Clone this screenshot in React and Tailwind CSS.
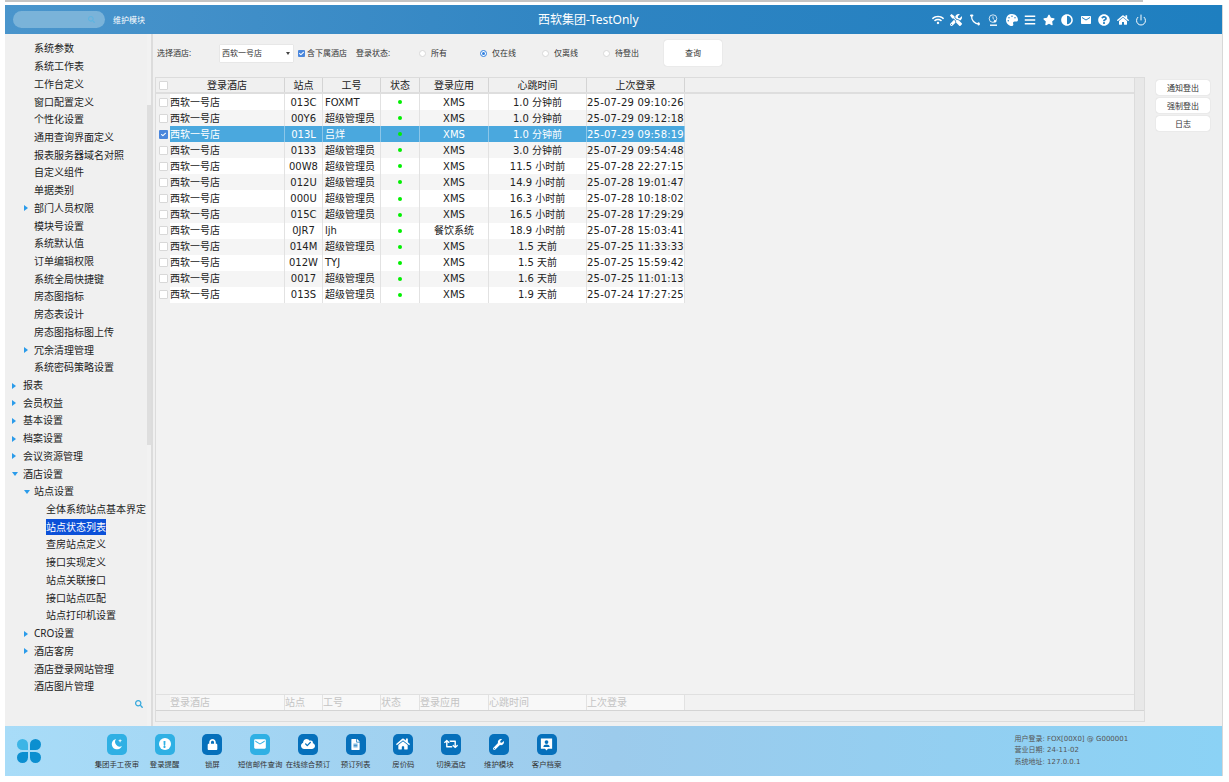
import {
  FaAdjust, FaBars, FaCheck, FaCloud, FaExclamation, FaHome, FaLock, FaMoon, FaPalette,
  FaQuestionCircle, FaSearch, FaStar, FaTools, FaWifi, FaWrench, FaRetweet, FaFileAlt,
} from 'react-icons/fa'
import { FiPower } from 'react-icons/fi'
import { MdEmail } from 'react-icons/md'

const font = { fontFamily: '"Noto Sans", "Noto Sans CJK SC", sans-serif' }
const dataFont = { fontFamily: '"DejaVu Sans", "Noto Sans CJK SC", sans-serif' }

const tree = [
  { label: '系统参数', level: 1 },
  { label: '系统工作表', level: 1 },
  { label: '工作台定义', level: 1 },
  { label: '窗口配置定义', level: 1 },
  { label: '个性化设置', level: 1 },
  { label: '通用查询界面定义', level: 1 },
  { label: '报表服务器域名对照', level: 1 },
  { label: '自定义组件', level: 1 },
  { label: '单据类别', level: 1 },
  { label: '部门人员权限', level: 1, arrow: 'right' },
  { label: '模块号设置', level: 1 },
  { label: '系统默认值', level: 1 },
  { label: '订单编辑权限', level: 1 },
  { label: '系统全局快捷键', level: 1 },
  { label: '房态图指标', level: 1 },
  { label: '房态表设计', level: 1 },
  { label: '房态图指标图上传', level: 1 },
  { label: '冗余清理管理', level: 1, arrow: 'right' },
  { label: '系统密码策略设置', level: 1 },
  { label: '报表', level: 0, arrow: 'right' },
  { label: '会员权益', level: 0, arrow: 'right' },
  { label: '基本设置', level: 0, arrow: 'right' },
  { label: '档案设置', level: 0, arrow: 'right' },
  { label: '会议资源管理', level: 0, arrow: 'right' },
  { label: '酒店设置', level: 0, arrow: 'down' },
  { label: '站点设置', level: 1, arrow: 'down' },
  { label: '全体系统站点基本界定', level: 2 },
  { label: '站点状态列表', level: 2, active: true },
  { label: '查房站点定义', level: 2 },
  { label: '接口实现定义', level: 2 },
  { label: '站点关联接口', level: 2 },
  { label: '接口站点匹配', level: 2 },
  { label: '站点打印机设置', level: 2 },
  { label: 'CRO设置', level: 1, arrow: 'right' },
  { label: '酒店客房', level: 1, arrow: 'right' },
  { label: '酒店登录网站管理', level: 1 },
  { label: '酒店图片管理', level: 1 },
]

const rows = [
  ['013C', 'FOXMT', 'XMS', '1.0 分钟前', '25-07-29 09:10:26'],
  ['00Y6', '超级管理员', 'XMS', '1.0 分钟前', '25-07-29 09:12:18'],
  ['013L', '吕烊', 'XMS', '1.0 分钟前', '25-07-29 09:58:19', true],
  ['0133', '超级管理员', 'XMS', '3.0 分钟前', '25-07-29 09:54:48'],
  ['00W8', '超级管理员', 'XMS', '11.5 小时前', '25-07-28 22:27:15'],
  ['012U', '超级管理员', 'XMS', '14.9 小时前', '25-07-28 19:01:47'],
  ['000U', '超级管理员', 'XMS', '16.3 小时前', '25-07-28 10:18:02'],
  ['015C', '超级管理员', 'XMS', '16.5 小时前', '25-07-28 17:29:29'],
  ['0JR7', 'ljh', '餐饮系统', '18.9 小时前', '25-07-28 15:03:41'],
  ['014M', '超级管理员', 'XMS', '1.5 天前', '25-07-25 11:33:33'],
  ['012W', 'TYJ', 'XMS', '1.5 天前', '25-07-25 15:59:42'],
  ['0017', '超级管理员', 'XMS', '1.6 天前', '25-07-25 11:01:13'],
  ['013S', '超级管理员', 'XMS', '1.9 天前', '25-07-24 17:27:25'],
]

function CloudCheck() {
  return (
    <span className="relative flex items-center justify-center text-[14px]">
      <FaCloud />
      <FaCheck className="absolute text-[6px] text-[#0670bb]" />
    </span>
  )
}

function Portrait() {
  return (
    <svg viewBox="0 0 16 16" className="h-[15px] w-[15px]">
      <path d="M2 1.5h12v11H9.6L8 14.5l-1.6-2H2z" fill="#fff" />
      <circle cx="8" cy="5.4" r="2" fill="#0670bb" />
      <path d="M4.6 10.6c.3-1.8 1.6-2.5 3.4-2.5s3.1.7 3.4 2.5z" fill="#0670bb" />
    </svg>
  )
}

function MoonStar() {
  return (
    <svg viewBox="0 0 16 16" className="h-[14px] w-[14px]" fill="#fff">
      <path d="M7 2.2a6 6 0 1 0 6.6 8.2A5.4 5.4 0 0 1 7 2.2z" />
      <path d="M11.5 2l.6 1.7 1.7.6-1.7.6-.6 1.7-.6-1.7-1.7-.6 1.7-.6z" />
    </svg>
  )
}

// thin handset in the top bar
function Handset() {
  return (
    <svg viewBox="0 0 12 12" className="h-[12px] w-[12px]" fill="none" stroke="#fff" strokeLinecap="round">
      <path d="M2.6 1.6C2.2 6 5.5 10 10.2 10" strokeWidth="1.3" />
      <path d="M2 1.5h1.4M9.6 9.2v1.4" strokeWidth="2" />
    </svg>
  )
}

function ClockUser() {
  return (
    <svg viewBox="0 0 12 12" className="h-[12px] w-[12px]" fill="none" stroke="#fff">
      <circle cx="6" cy="4.6" r="3.8" strokeWidth="0.8" />
      <path d="M6 2.4v2.2l1.2.8" strokeWidth="0.8" />
      <circle cx="8" cy="7.2" r="1.2" fill="#fff" stroke="none" />
      <path d="M3 11.2h7" strokeWidth="1.4" />
    </svg>
  )
}

const dock = [
  { label: '集团手工夜审', Icon: MoonStar, light: true },
  { label: '登录提醒', Icon: FaExclamation, light: true, round: true },
  { label: '锁屏', Icon: FaLock },
  { label: '短信邮件查询', Icon: MdEmail, light: true, big: true },
  { label: '在线综合预订', Icon: CloudCheck },
  { label: '预订列表', Icon: FaFileAlt },
  { label: '房价码', Icon: FaHome, big: true },
  { label: '切换酒店', Icon: FaRetweet, big: true },
  { label: '维护模块', Icon: FaWrench },
  { label: '客户档案', Icon: Portrait },
]

const topIcons = [FaWifi, FaTools, Handset, ClockUser, FaPalette, FaBars, FaStar, FaAdjust, MdEmail, FaQuestionCircle, FaHome, FiPower]

function Arrow({ dir }) {
  if (dir === 'down') {
    return <span className="h-0 w-0 border-x-[3px] border-t-[4px] border-x-transparent border-t-[#2a9bea]" />
  }
  return <span className="h-0 w-0 border-y-[3px] border-l-[4px] border-y-transparent border-l-[#2a9bea]" />
}

function TreeItem({ item }) {
  const pad = item.level === 0 ? 'pl-[7px]' : item.level === 1 ? 'pl-[19px]' : 'pl-[41px]'
  const arrowWidth = item.level === 0 ? 'w-[11px]' : 'w-[10px]'
  return (
    <div className={`flex h-[17.72px] items-center text-[10px] text-[#222] ${pad}`}>
      {item.level < 2 && (
        <span className={`flex shrink-0 items-center ${arrowWidth}`}>{item.arrow && <Arrow dir={item.arrow} />}</span>
      )}
      <span className={item.active ? 'bg-[#0b50d8] leading-[16px] text-white' : ''}>{item.label}</span>
    </div>
  )
}

function Sidebar() {
  return (
    <aside className="flex w-[142px] shrink-0 flex-col">
      <div className="flex-1 pt-[6px]">
        {tree.map((item) => (
          <TreeItem key={item.label} item={item} />
        ))}
      </div>
      <div className="flex h-[26px] justify-end pr-[4px]">
        <FaSearch className="text-[8px] text-[#35a8dc]" />
      </div>
    </aside>
  )
}

function Scrollbar() {
  return (
    <div className="flex w-[6px] shrink-0 flex-col border-r-2 border-[#dcdcdc] bg-[#f2f2f2] pt-[71px]">
      <div className="h-[340px] bg-[#dedede]" />
    </div>
  )
}

function Radio({ label, checked, className }) {
  return (
    <label className={`flex items-center gap-[5px] ${className}`}>
      <span className={`flex h-[7px] w-[7px] items-center justify-center rounded-full border ${checked ? 'border-[#2f7fe0] bg-white' : 'border-[#d8d8d8] bg-white'}`}>
        {checked && <span className="h-[3px] w-[3px] rounded-full bg-[#2f7fe0]" />}
      </span>
      {label}
    </label>
  )
}

function Toolbar() {
  return (
    <div className="flex h-[43px] items-center pb-[5px] pl-[4px] text-[8px] text-[#333]">
      <span className="w-[63px]">选择酒店:</span>
      <div className="flex h-[17px] w-[73px] items-center justify-between bg-white pl-[2px] pr-[3px] shadow-[0_0_1px_#bbb]">
        西软一号店
        <span className="h-0 w-0 border-x-[2.5px] border-t-[3px] border-x-transparent border-t-[#444]" />
      </div>
      <span className="ml-[5px] flex h-[7px] w-[7px] items-center justify-center rounded-[1px] bg-[#4a86dc]">
        <FaCheck className="text-[5px] text-white" />
      </span>
      <span className="ml-[2px] w-[49px]">含下属酒店</span>
      <span className="w-[63px]">登录状态:</span>
      <Radio label="所有" className="w-[61px]" />
      <Radio label="仅在线" checked className="w-[62px]" />
      <Radio label="仅离线" className="w-[61px]" />
      <Radio label="待登出" className="w-[61px]" />
      <button className="h-[26px] w-[58px] rounded-[3px] bg-white text-[8px] text-[#333] shadow-[0_0_1px_#bbb]">查询</button>
    </div>
  )
}

function CheckCell({ checked }) {
  return (
    <div className="flex w-[14px] shrink-0 items-center justify-center">
      <span className={`flex h-[9px] w-[9px] items-center justify-center rounded-[1px] ${checked ? 'bg-[#4a86dc]' : 'border border-[#d8d8d8] bg-white'}`}>
        {checked && <FaCheck className="text-[5px] text-white" />}
      </span>
    </div>
  )
}

function Table() {
  const cell = 'flex h-full shrink-0 items-center border-r'
  return (
    <div className="flex min-w-0 flex-1 flex-col border border-[#dcdcdc] bg-[#f2f2f2]">
      <div className="flex min-h-0 flex-1">
        <div className="flex min-w-0 flex-1 flex-col">
          <div className="flex h-[16px] shrink-0 items-center border-b-2 border-[#dedede] bg-[#f0f0f0] text-[10px] text-[#222]">
            <CheckCell />
            <div className={`${cell} w-[115px] justify-center border-[#d4d4d4]`}>登录酒店</div>
            <div className={`${cell} w-[38px] justify-center border-[#d4d4d4]`}>站点</div>
            <div className={`${cell} w-[58px] justify-center border-[#d4d4d4]`}>工号</div>
            <div className={`${cell} w-[39px] justify-center border-[#d4d4d4]`}>状态</div>
            <div className={`${cell} w-[69px] justify-center border-[#d4d4d4]`}>登录应用</div>
            <div className={`${cell} w-[98px] justify-center border-[#d4d4d4]`}>心跳时间</div>
            <div className={`${cell} w-[98px] justify-center border-[#d4d4d4]`}>上次登录</div>
          </div>
          {rows.map((r, i) => {
            const selected = r[5]
            const line = selected ? 'border-[#8cc6e8]' : 'border-[#e2e2e2]'
            const bg = selected ? 'bg-[#4aa8de] text-white' : i % 2 ? 'bg-[#f5f5f5] text-[#222]' : 'bg-white text-[#222]'
            return (
              <div key={r[0]} className="flex h-[16.08px] shrink-0 items-center text-[10px]" style={dataFont}>
                <div className="flex h-full w-[14px] shrink-0 bg-[#f2f2f2]">
                  <CheckCell checked={selected} />
                </div>
                <div className={`flex h-full items-center ${bg}`}>
                  <div className={`${cell} w-[115px] ${line}`}>西软一号店</div>
                  <div className={`${cell} w-[38px] justify-center ${line}`}>{r[0]}</div>
                  <div className={`${cell} w-[58px] pl-[2px] ${line}`}>{r[1]}</div>
                  <div className={`${cell} w-[39px] justify-center ${line}`}>
                    <span className="h-[4px] w-[4px] rounded-full bg-[#00f000]" />
                  </div>
                  <div className={`${cell} w-[69px] justify-center ${line}`}>{r[2]}</div>
                  <div className={`${cell} w-[98px] justify-center ${line}`}>{r[3]}</div>
                  <div className={`${cell} w-[98px] justify-center tracking-[0.2px] ${line}`}>{r[4]}</div>
                </div>
              </div>
            )
          })}
          <div className="flex-1" />
          <div className="flex h-[16px] shrink-0 items-center border-t border-[#e0e0e0] text-[10px] text-[#c4c4c4]">
            <div className="w-[14px] shrink-0" />
            <div className="flex h-full bg-[#f8f8f8]">
              <div className="w-[115px] border-r border-[#e2e2e2]">登录酒店</div>
              <div className="w-[38px] border-r border-[#e2e2e2]">站点</div>
              <div className="w-[58px] border-r border-[#e2e2e2]">工号</div>
              <div className="w-[39px] border-r border-[#e2e2e2]">状态</div>
              <div className="w-[69px] border-r border-[#e2e2e2]">登录应用</div>
              <div className="w-[98px] border-r border-[#e2e2e2]">心跳时间</div>
              <div className="w-[98px] border-r border-[#e2e2e2]">上次登录</div>
            </div>
          </div>
        </div>
        <div className="w-[10px] shrink-0 border-l border-[#dcdcdc] bg-[#e8e8e8]" />
      </div>
      <div className="h-[11px] shrink-0 border-t border-[#d4d4d4] bg-[#efefef]" />
    </div>
  )
}

function SideButton({ children }) {
  return (
    <button className="flex h-[15px] w-[54px] items-center justify-center rounded-[3px] bg-white text-[8px] text-[#333] shadow-[0_0_1px_#bbb]">
      {children}
    </button>
  )
}

function Main() {
  return (
    <main className="flex min-w-0 flex-1 flex-col">
      <Toolbar />
      <div className="flex min-h-0 flex-1 pb-[4px] pl-[2px]">
        <Table />
        <div className="flex w-[77px] shrink-0 flex-col gap-[3px] pl-[11px] pt-[3px]">
          <SideButton>通知登出</SideButton>
          <SideButton>强制登出</SideButton>
          <SideButton>日志</SideButton>
        </div>
      </div>
    </main>
  )
}

function Header() {
  return (
    <header className="relative flex h-[29px] shrink-0 items-center bg-gradient-to-r from-[#4a95cc] via-[#2e84c2] to-[#1e7fc0] text-white">
      <div className="ml-[8px] flex h-[17px] w-[92px] items-center justify-end rounded-full bg-[#7ab3d9] pr-[10px]">
        <FaSearch className="text-[7px] text-[#5fb4e0]" />
      </div>
      <span className="ml-[8px] text-[8px]">维护模块</span>
      <div className="absolute left-[533px] text-[12px]">西软集团-TestOnly</div>
      <div className="absolute right-[75px] flex items-center gap-[6.5px] text-[12px]">
        {topIcons.map((Icon, i) => (
          <Icon key={i} />
        ))}
      </div>
    </header>
  )
}

function Clover() {
  return (
    <div className="grid w-fit grid-cols-[11px_11px] gap-[2px]">
      <span className="h-[11px] w-[11px] rounded-full rounded-br-none bg-[#3db5e6]" />
      <span className="h-[11px] w-[11px] rounded-full rounded-bl-none bg-[#0c8fd0]" />
      <span className="h-[11px] w-[11px] rounded-full rounded-tr-none bg-[#0c8fd0]" />
      <span className="h-[11px] w-[11px] rounded-full rounded-tl-none bg-[#0c8fd0]" />
    </div>
  )
}

function Dock() {
  return (
    <footer className="flex h-[50px] shrink-0 items-center bg-gradient-to-r from-[#a8dcf8] via-[#9ccbec] to-[#8bd2f5]">
      <div className="ml-[12px] w-[76px] shrink-0">
        <Clover />
      </div>
      <div className="flex">
        {dock.map(({ label, Icon, light, round, big }) => (
          <div key={label} className="flex w-[47.75px] flex-col items-center gap-[4px]">
            <div className={`flex h-[21px] w-[20px] items-center justify-center rounded-[5px] text-white ${big ? 'text-[14px]' : 'text-[11px]'} ${light ? 'bg-[#2fb0e4]' : 'bg-[#0670bb]'}`}>
              {round ? (
                <span className="flex h-[12px] w-[12px] items-center justify-center rounded-full bg-white">
                  <Icon className="text-[7px] text-[#2fb0e4]" />
                </span>
              ) : (
                <Icon />
              )}
            </div>
            <span className="whitespace-nowrap text-[7.4px] leading-[10px] text-[#333]">{label}</span>
          </div>
        ))}
      </div>
      <div className="ml-[444px] flex flex-col gap-[2px] whitespace-nowrap text-[7px] leading-[9.5px] text-[#555]" style={dataFont}>
        <span>用户登录: FOX[00X0] @ G000001</span>
        <span>营业日期: 24-11-02</span>
        <span>系统地址: 127.0.0.1</span>
      </div>
    </footer>
  )
}

export default function App() {
  return (
    <div className="flex h-[782px] w-[1229px] flex-col bg-white pb-[6px] pl-[5px]" style={font}>
      <div className="mb-[3px] h-[2px] w-[1138px] shrink-0 bg-[#c4c4c4]" />
      <div className="flex min-h-0 w-[1217px] flex-1 flex-col bg-[#f0f0f0] shadow-[1px_0_0_#d8d8d8]">
        <Header />
        <div className="flex min-h-0 flex-1">
          <Sidebar />
          <Scrollbar />
          <Main />
        </div>
        <Dock />
      </div>
    </div>
  )
}
